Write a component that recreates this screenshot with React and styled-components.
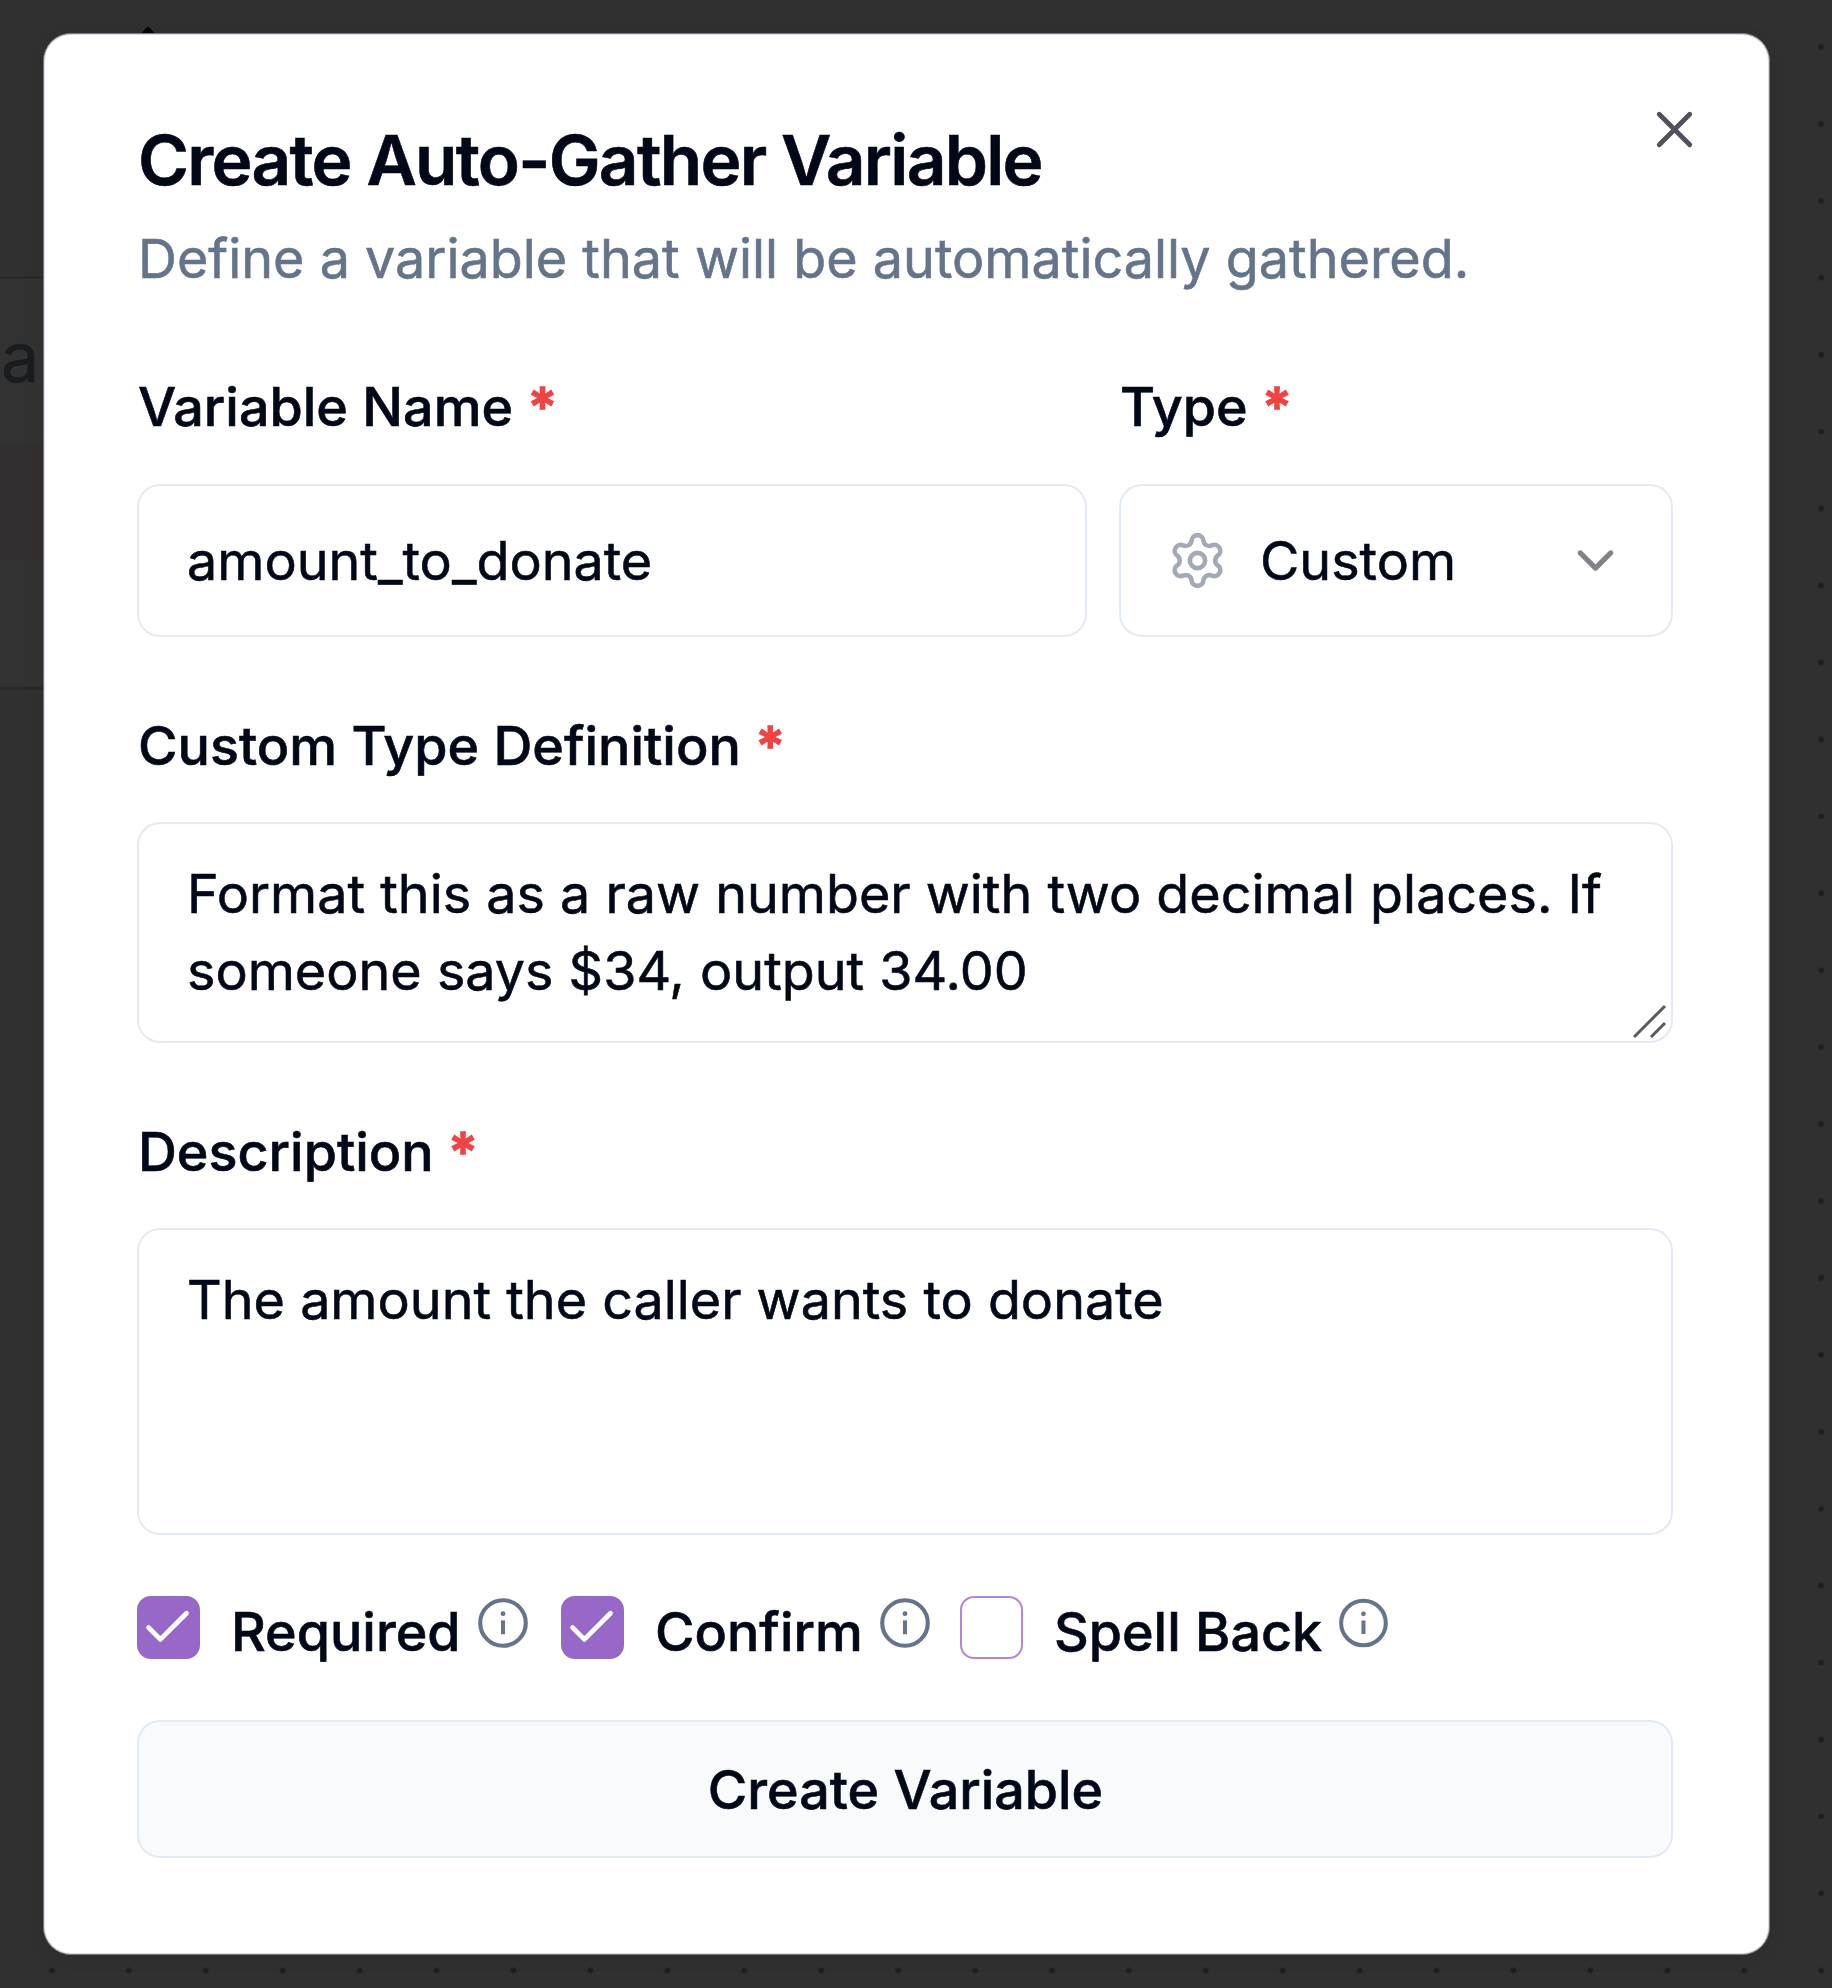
import React from "react";
import styled, { createGlobalStyle } from "styled-components";
import { Check, ChevronDown, Settings, X } from "lucide-react";

const COLORS = {
  ink: "#020817",
  muted: "#64748b",
  border: "#e4eaf3",
  purple: "#9768c8",
  red: "#f04444",
};

const options = [
  { label: "Required", checked: true, width: 424 },
  { label: "Confirm", checked: true, width: 399 },
  { label: "Spell Back", checked: false, width: 431 },
];

function InfoIcon() {
  return (
    <svg viewBox="0 0 15 15" fill="none">
      <circle cx="7.5" cy="7.5" r="6.1" stroke="currentColor" strokeWidth="1.1" />
      <circle cx="7.5" cy="5" r="0.65" fill="currentColor" />
      <path d="M7.5 6.8V10.5" stroke="currentColor" strokeWidth="1.1" />
    </svg>
  );
}

function RequiredLabel({ children }) {
  return (
    <Label>
      {children} <span>*</span>
    </Label>
  );
}

function App() {
  return (
    <Backdrop>
      <GlobalStyle />
      <NodePanel>
        <NodeText>a</NodeText>
        <NodeBand />
      </NodePanel>
      <EdgeMark viewBox="0 0 14 8">
        <path d="M0 8L4 3Q7 -1 10 3L14 8Z" />
      </EdgeMark>
      <Dialog>
        <CloseButton>
          <X size={61} strokeWidth={1.9} />
        </CloseButton>
        <Title>Create Auto-Gather Variable</Title>
        <Subtitle>Define a variable that will be automatically gathered.</Subtitle>
        <Row>
          <NameField>
            <RequiredLabel>Variable Name</RequiredLabel>
            <Control>amount_to_donate</Control>
          </NameField>
          <TypeField>
            <RequiredLabel>Type</RequiredLabel>
            <Control $select>
              <Settings className="gear" size={61} strokeWidth={1.8} />
              Custom
              <ChevronDown className="chevron" size={61} strokeWidth={2} />
            </Control>
          </TypeField>
        </Row>
        <Field>
          <RequiredLabel>Custom Type Definition</RequiredLabel>
          <TextArea $height={221}>
            Format this as a raw number with two decimal places. If
            <br />
            someone says $34, output 34.00
            <Grip viewBox="0 0 34 34">
              <path d="M1 33L32 2M18 33L32 19" />
            </Grip>
          </TextArea>
        </Field>
        <Field>
          <RequiredLabel>Description</RequiredLabel>
          <TextArea $height={307}>The amount the caller wants to donate</TextArea>
        </Field>
        <Options>
          {options.map(({ label, checked, width }) => (
            <Option key={label} $width={width}>
              <Box $checked={checked}>
                {checked && <Check size={57} strokeWidth={2} />}
              </Box>
              <OptionText>{label}</OptionText>
              <InfoIcon />
            </Option>
          ))}
        </Options>
        <Submit>Create Variable</Submit>
      </Dialog>
    </Backdrop>
  );
}

const GlobalStyle = createGlobalStyle`
  * {
    box-sizing: border-box;
  }
  body {
    margin: 0;
    background: #303030;
    font-family: Inter, "Liberation Sans", sans-serif;
  }
`;

const Backdrop = styled.div`
  position: relative;
  width: 1832px;
  height: 1988px;
  padding: 33px 0 0 43px;
  overflow: hidden;
  background-color: #303030;
  background-image: radial-gradient(circle, #1f1f1f 2.4px, transparent 3.4px);
  background-size: 76.93px 76.95px;
  background-position: 13.5px 8.5px;
`;

/* canvas node that sticks out behind the dialog */
const NodePanel = styled.div`
  position: absolute;
  left: 0;
  top: 276px;
  width: 80px;
  height: 414px;
  background: #323232;
  border-top: 3px solid #2b2b2b;
  border-bottom: 3px solid #292929;
`;
const NodeText = styled.div`
  position: absolute;
  left: 1px;
  top: 40px;
  font-size: 68px;
  line-height: 76px;
  -webkit-text-stroke: 0.6px currentColor;
  color: #1a1d20;
`;
const NodeBand = styled.div`
  margin-top: 164px;
  height: 116px;
  background: #332f30;
`;
const EdgeMark = styled.svg`
  position: absolute;
  left: 141px;
  top: 26px;
  width: 14px;
  height: 8px;
  fill: #050505;
`;

const Dialog = styled.div`
  position: relative;
  width: 1727px;
  height: 1922px;
  padding: 92px 96px 0 93px;
  border: 1px solid #777a80;
  border-radius: 28px;
  background: #fff;
  color: ${COLORS.ink};
  box-shadow: inset 0 0 0 1px #d8dde5, 0 4px 16px rgba(0, 0, 0, 0.08);
  -webkit-text-stroke: 0.6px currentColor;
`;
const CloseButton = styled.div`
  position: absolute;
  right: 64px;
  top: 65px;
  display: flex;
  color: #51505b;
`;
const Title = styled.h1`
  margin: 0 0 0 1px;
  font-size: 69.25px;
  line-height: 69px;
  font-weight: 600;
  letter-spacing: -0.025em;
  white-space: nowrap;
`;
const Subtitle = styled.p`
  margin: 25px 0 0 1px;
  font-size: 53.88px;
  line-height: 77px;
  color: ${COLORS.muted};
  white-space: nowrap;
`;
const Row = styled.div`
  display: flex;
  gap: 32px;
  margin-top: 83px;
`;
const NameField = styled.div`
  width: 950px;
`;
const TypeField = styled.div`
  flex: 1;
`;
const Label = styled.div`
  padding-left: 1px;
  font-size: 53.85px;
  line-height: 54px;
  font-weight: 500;
  white-space: nowrap;

  & span {
    margin-left: 1px;
    color: ${COLORS.red};
    -webkit-text-stroke: 1.6px currentColor;
  }
`;
const Control = styled.div`
  display: flex;
  align-items: center;
  height: 153px;
  margin-top: 50px;
  padding: ${({ $select }) => ($select ? "0 45px 0 46px" : "0 48px")};
  border: 2px solid ${COLORS.border};
  border-radius: 23px;
  font-size: 53.85px;

  & .gear {
    margin-right: 32px;
    color: #a3a9b5;
  }
  & .chevron {
    margin-left: auto;
    color: #818389;
  }
`;
const TextArea = styled.div`
  position: relative;
  height: ${({ $height }) => $height}px;
  margin-top: 49px;
  padding: 31px 48px;
  border: 2px solid ${COLORS.border};
  border-radius: 23px;
  font-size: 53.85px;
  line-height: 77px;
  white-space: nowrap;
`;
const Field = styled.div`
  margin-top: 82px;
`;
const Grip = styled.svg`
  position: absolute;
  right: 4px;
  bottom: 3px;
  width: 34px;
  height: 34px;
  fill: none;
  stroke: #5c5c5c;
  stroke-width: 3;
`;
const Options = styled.div`
  display: flex;
  height: 63px;
  margin-top: 61px;
`;
const Option = styled.div`
  display: flex;
  align-items: flex-start;
  width: ${({ $width }) => $width}px;

  & > svg {
    width: 56px;
    height: 56px;
    margin: -1px 0 0 14px;
    color: ${COLORS.muted};
  }
`;
const Box = styled.div`
  display: flex;
  align-items: center;
  justify-content: center;
  width: 63px;
  height: 63px;
  flex-shrink: 0;
  border: 2px solid ${({ $checked }) => ($checked ? COLORS.purple : "#b384dc")};
  border-radius: 14px;
  background: ${({ $checked }) => ($checked ? COLORS.purple : "#fff")};
  color: #fff;

  & svg {
    flex-shrink: 0;
    margin-right: 2px;
  }
`;
const OptionText = styled.span`
  margin: 9px 0 0 31px;
  font-size: 53.8px;
  line-height: 54px;
  font-weight: 500;
  white-space: nowrap;
`;
const Submit = styled.button`
  display: block;
  width: 100%;
  height: 138px;
  margin-top: 61px;
  padding: 0 0 0 1px;
  border: 2px solid ${COLORS.border};
  border-radius: 23px;
  background: #f9fafc;
  color: ${COLORS.ink};
  font: 500 53.8px Inter, "Liberation Sans", sans-serif;
  -webkit-text-stroke: 0.6px currentColor;
`;

export default App;
